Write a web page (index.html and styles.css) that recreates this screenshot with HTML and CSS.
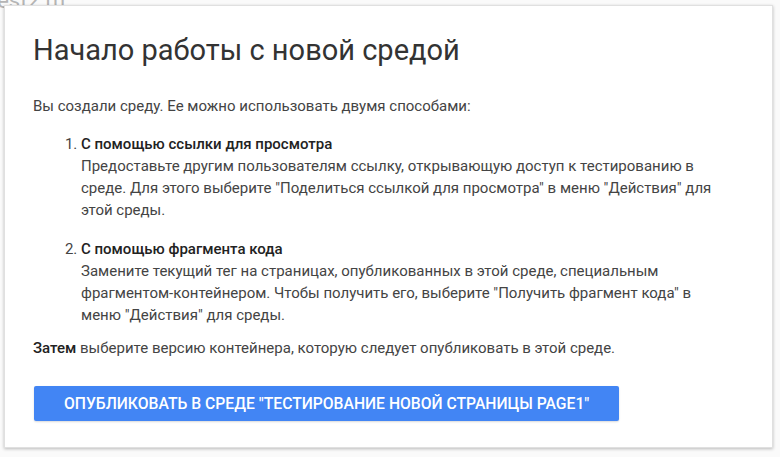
FILE: index.html
```html
<!DOCTYPE html>
<html lang="ru">
<head>
    <meta charset="UTF-8">
    <meta name="viewport" content="width=device-width, initial-scale=1.0">
    <title>Начало работы с новой средой</title>
    <link rel="stylesheet" href="styles.css">
</head>
<body>

    <div class="page-behind">
      <span class="site-name">test2.ru</span>
    </div>

    <div class="dialog">
      <h1 class="dialog-title">Начало работы с новой средой</h1>

      <p class="intro">Вы создали среду. Ее можно использовать двумя способами:</p>

      <ol class="ways">
        <li>
          <b>С помощью ссылки для просмотра</b><br>
          Предоставьте другим пользователям ссылку, открывающую доступ к тестированию в
          среде. Для этого выберите "Поделиться ссылкой для просмотра" в меню "Действия" для
          этой среды.
        </li>
        <li>
          <b>С помощью фрагмента кода</b><br>
          Замените текущий тег на страницах, опубликованных в этой среде, специальным
          фрагментом-контейнером. Чтобы получить его, выберите "Получить фрагмент кода" в
          меню "Действия" для среды.
        </li>
      </ol>

      <p class="then"><b>Затем</b> выберите версию контейнера, которую следует опубликовать в этой среде.</p>

      <button class="publish-btn">Опубликовать в среде "Тестирование новой страницы PAGE1"</button>
    </div>

</body>
</html>
```

FILE: styles.css
```css
*{
  margin: 0;
  padding: 0;
  box-sizing: border-box;
}
body{
  background: #fff;
  font-family: Roboto, "Noto Sans", Arial, sans-serif;
  width: 780px;
  height: 457px;
  overflow: hidden;
  position: relative;
}
.page-behind{
  position: absolute;
  top: 0;
  left: 0;
  width: 100%;
  height: 100%;
  background: #fafafa;
}
.site-name{
  position: absolute;
  top: -12px;
  left: -10px;
  font-size: 22px;
  color: #b5b5b5;
}
.dialog{
  position: relative;
  margin: 5px 0 0 4px;
  width: 769px;
  height: 443px;
  background: #fff;
  border: 1px solid #e0e0e0;
  box-shadow: 0 1px 3px rgba(0,0,0,.25);
  padding: 26px 46px 0 28px;
  color: #444;
}
.dialog-title{
  font-size: 29px;
  font-weight: 400;
  color: #333;
  line-height: 36px;
  margin-bottom: 27px;
}
.intro{
  font-size: 15px;
  line-height: 22px;
}
.ways{
  margin: 16px 0 11px 48px;
  font-size: 15px;
  line-height: 22px;
}
.ways li{
  margin-bottom: 17px;
}
.ways li:last-child{
  margin-bottom: 0;
}
.ways b, .then b{
  color: #222;
  font-weight: 500;
}
.then{
  font-size: 15px;
  line-height: 22px;
}
.publish-btn{
  margin: 27px 0 0 1px;
  height: 35px;
  padding: 0 30px;
  background: #4285f4;
  color: #fff;
  border: none;
  border-radius: 2px;
  font-family: Roboto, Arial, sans-serif;
  font-weight: 500;
  font-size: 15.7px;
  text-transform: uppercase;
  box-shadow: 0 1px 2px rgba(0,0,0,.15);
}
```
